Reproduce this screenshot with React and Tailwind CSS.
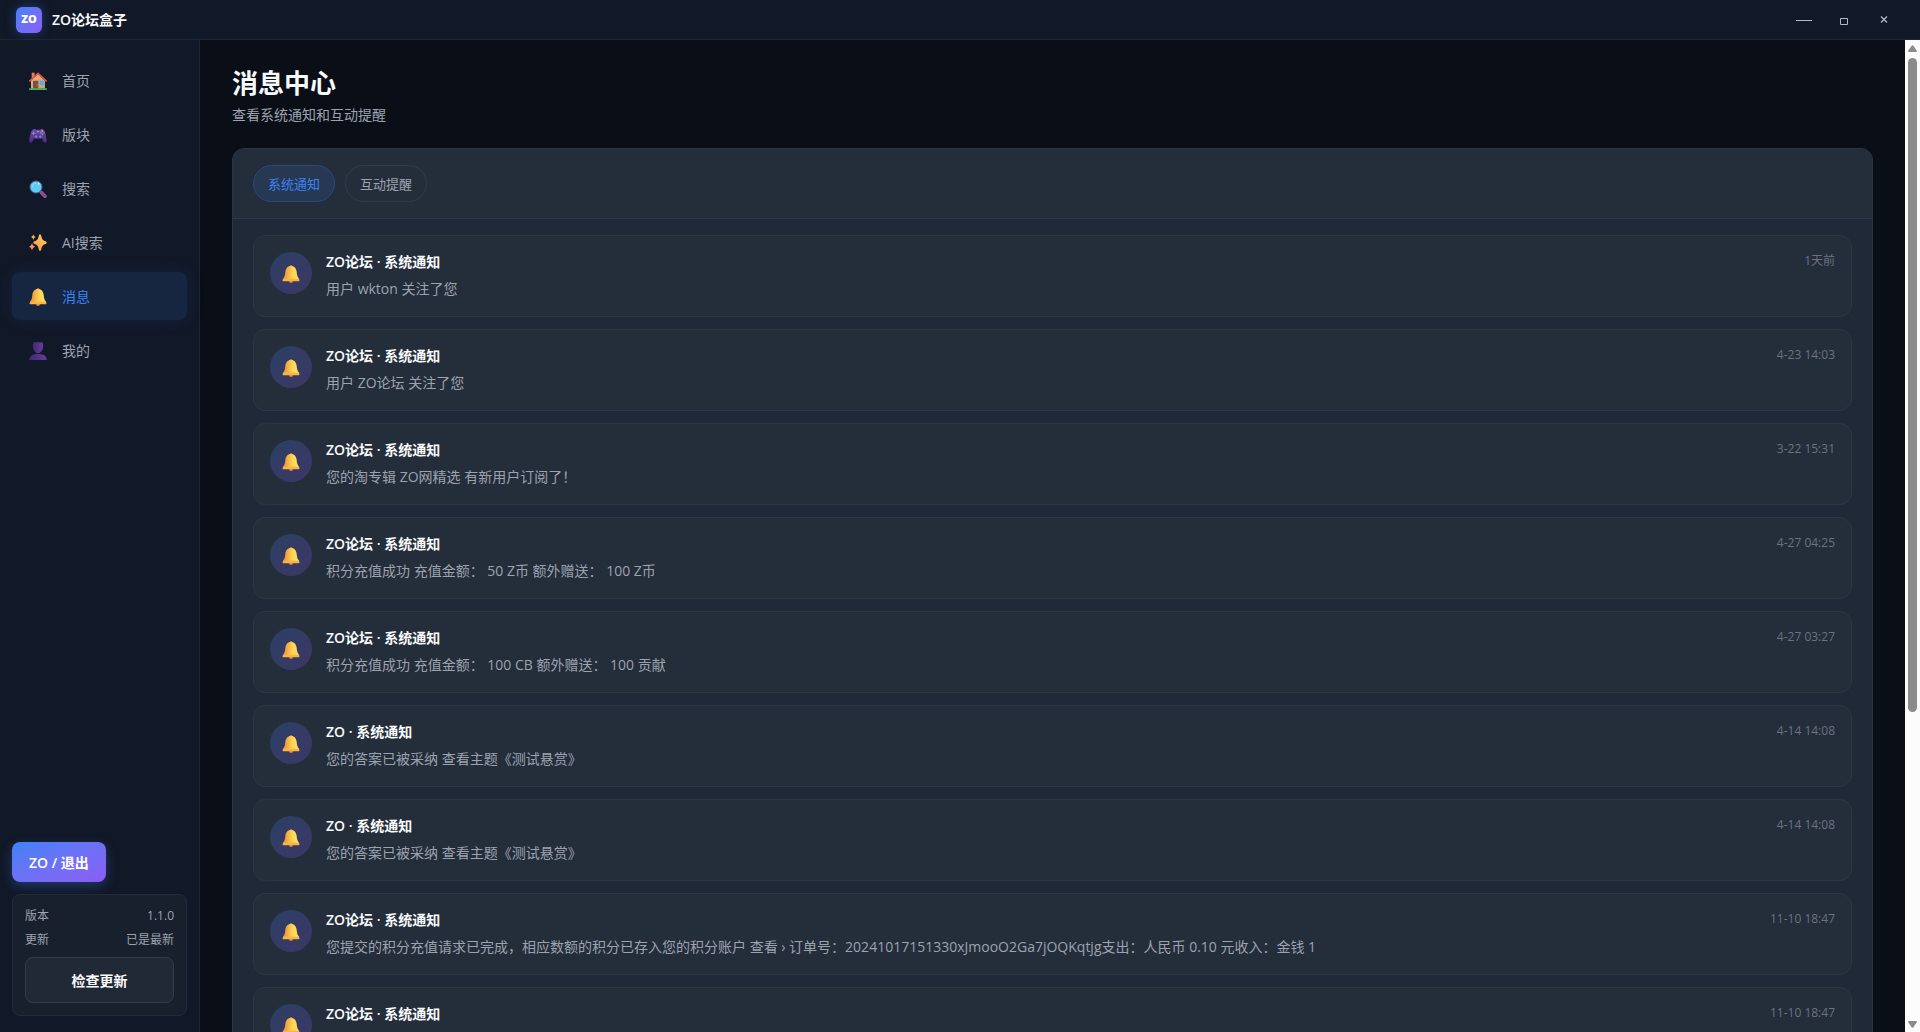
import React, { useState } from 'react';

const navItems = [
  { id: 'home', label: '首页', Icon: HomeIcon },
  { id: 'boards', label: '版块', Icon: GamepadIcon },
  { id: 'search', label: '搜索', Icon: SearchIcon },
  { id: 'ai', label: 'AI搜索', Icon: SparklesIcon },
  { id: 'messages', label: '消息', Icon: BellIcon },
  { id: 'mine', label: '我的', Icon: UserIcon },
];

const tabs = [
  { id: 'system', label: '系统通知' },
  { id: 'interact', label: '互动提醒' },
];

const notices = [
  { title: 'ZO论坛 · 系统通知', text: '用户 wkton 关注了您', time: '1天前' },
  { title: 'ZO论坛 · 系统通知', text: '用户 ZO论坛 关注了您', time: '4-23 14:03' },
  { title: 'ZO论坛 · 系统通知', text: '您的淘专辑 ZO网精选 有新用户订阅了！', time: '3-22 15:31' },
  { title: 'ZO论坛 · 系统通知', text: '积分充值成功 充值金额： 50 Z币 额外赠送： 100 Z币', time: '4-27 04:25' },
  { title: 'ZO论坛 · 系统通知', text: '积分充值成功 充值金额： 100 CB 额外赠送： 100 贡献', time: '4-27 03:27' },
  { title: 'ZO · 系统通知', text: '您的答案已被采纳 查看主题《测试悬赏》', time: '4-14 14:08' },
  { title: 'ZO · 系统通知', text: '您的答案已被采纳 查看主题《测试悬赏》', time: '4-14 14:08' },
  {
    title: 'ZO论坛 · 系统通知',
    text: '您提交的积分充值请求已完成，相应数额的积分已存入您的积分账户 查看 › 订单号：20241017151330xJmooO2Ga7jOQKqtjg支出：人民币 0.10 元收入：金钱 1',
    time: '11-10 18:47',
  },
  { title: 'ZO论坛 · 系统通知', time: '11-10 18:47' },
];

function HomeIcon() {
  return (
    <svg viewBox="0 0 54 54" className="size-[18px]" aria-hidden="true">
      <defs>
        <linearGradient id="homeWall" x1="0" y1="0" x2="1" y2="1">
          <stop offset="0" stopColor="#f0b183" />
          <stop offset="1" stopColor="#d39a70" />
        </linearGradient>
      </defs>
      <rect x="8" y="2" width="9" height="20" fill="#c9855b" />
      <path d="M6 26 27 6l21 20v24H6z" fill="url(#homeWall)" />
      <rect x="12" y="26" width="16" height="24" rx="1" fill="#7c4f45" />
      <circle cx="24" cy="38" r="1.5" fill="#d9a27a" />
      <rect x="32" y="26" width="13" height="13" rx="1" fill="#3fb4f2" />
      <path d="M2 27 27 4l25 23" fill="none" stroke="#e2543a" strokeWidth="5" strokeLinecap="round" strokeLinejoin="round" />
      <rect x="0" y="49" width="54" height="5" rx="2" fill="#3bb55c" />
    </svg>
  );
}

function GamepadIcon() {
  return (
    <svg viewBox="0 0 54 54" className="size-[18px]" aria-hidden="true">
      <defs>
        <linearGradient id="padBody" x1="0" y1="0" x2="0" y2="1">
          <stop offset="0" stopColor="#6f4fa8" />
          <stop offset="1" stopColor="#4b2a80" />
        </linearGradient>
      </defs>
      <path
        d="M13 10c3-2 6-1 8 1h12c2-2 5-3 8-1 6 2 9 12 12 31 1 6-1 9-4 9-4 0-6-5-10-12H15C11 45 9 50 5 50c-3 0-5-3-4-9C4 22 7 12 13 10z"
        fill="url(#padBody)"
      />
      <path d="M14 17v10M9 22h10" stroke="#8d86e0" strokeWidth="3" />
      <path d="M21 28v8M17 32h8M34 28v8M30 32h8" stroke="#8a7be0" strokeWidth="3" />
      <circle cx="27" cy="17" r="2" fill="#d8d0ff" />
      <circle cx="40" cy="15" r="2.6" fill="#f3c84b" />
      <circle cx="35" cy="20" r="2.6" fill="#3fa9f5" />
      <circle cx="45" cy="20" r="2.6" fill="#ef4b5f" />
      <circle cx="40" cy="25" r="2.6" fill="#35c48b" />
    </svg>
  );
}

function SearchIcon() {
  return (
    <svg viewBox="0 0 54 54" className="size-[18px]" aria-hidden="true">
      <path d="m33 34 4 4" stroke="#8a6aa8" strokeWidth="5" />
      <path d="m38 38 10 11" stroke="#8b4f8f" strokeWidth="11" strokeLinecap="round" />
      <circle cx="21" cy="21" r="18" fill="#5ecbf0" stroke="#5d5f9e" strokeWidth="3" />
      <path d="M9 21a12 12 0 0 1 12-12" fill="none" stroke="#8fe0fa" strokeWidth="3" strokeLinecap="round" />
      <circle cx="29" cy="11" r="2.5" fill="#d7f6ff" />
    </svg>
  );
}

function SparklesIcon() {
  return (
    <svg viewBox="0 0 54 54" className="size-[18px]" aria-hidden="true">
      <defs>
        <linearGradient id="spark" x1="1" y1="0" x2="0" y2="1">
          <stop offset="0" stopColor="#ffd84f" />
          <stop offset="1" stopColor="#ff8a5c" />
        </linearGradient>
      </defs>
      <path d="M33 1c2 0 3 2 4 6 2 9 4 12 12 15 3 1 4 2 4 4s-1 3-4 4c-8 3-10 6-12 15-1 4-2 6-4 6s-3-2-4-6c-2-9-4-12-12-15-3-1-4-2-4-4s1-3 4-4c8-3 10-6 12-15 1-4 2-6 4-6z" fill="url(#spark)" />
      <path d="M13 1c1 5 3 7 7 8-4 2-6 4-7 9-1-5-3-7-7-9 4-1 6-3 7-8z" fill="#ffb95a" />
      <path d="M9 28c2 6 4 8 10 10-6 2-8 4-10 11-2-7-4-9-9-11 5-2 7-4 9-10z" fill="#ff8f6b" />
    </svg>
  );
}

function BellIcon() {
  return (
    <svg viewBox="0 0 54 54" className="size-[18px]" aria-hidden="true">
      <defs>
        <linearGradient id="bellBody" x1="0" y1="0" x2="1" y2="0">
          <stop offset="0.1" stopColor="#ee9440" />
          <stop offset="0.6" stopColor="#ffd752" />
          <stop offset="1" stopColor="#ffe063" />
        </linearGradient>
      </defs>
      <circle cx="27" cy="4" r="3.5" fill="#f5a545" />
      <circle cx="27" cy="48" r="6" fill="#e8804a" />
      <path d="M27 3C16 3 11 11 10 21c-1 9-2 14-6 19-2 3-2 8-1 8h48c2 0 1-5-1-8-4-5-5-10-6-19C43 11 38 3 27 3z" fill="url(#bellBody)" />
      <path d="M5 41h44c2 2 3 8 2 8H3c-2 0-1-6 2-8z" fill="#f9b444" />
    </svg>
  );
}

function UserIcon() {
  return (
    <svg viewBox="0 0 54 54" className="size-[18px]" aria-hidden="true">
      <defs>
        <linearGradient id="userBody" x1="0" y1="0" x2="1" y2="0">
          <stop offset="0" stopColor="#44276f" />
          <stop offset="1" stopColor="#633f9c" />
        </linearGradient>
      </defs>
      <path d="M14 1h26c3 5 3 10 2 15-1 10-7 18-15 18s-14-8-15-18c-1-5-1-10 2-15z" fill="url(#userBody)" />
      <path d="M1 54c0-12 9-18 26-18s26 6 26 18z" fill="url(#userBody)" />
    </svg>
  );
}

function TitleBar() {
  return (
    <header className="flex h-10 shrink-0 items-center justify-between border-b border-[#1e2634] bg-[#111827] px-4">
      <div className="flex items-center gap-[10px]">
        <div className="flex size-[26px] items-center justify-center rounded-md bg-linear-to-br from-[#3b82f6] to-[#8b5cf6] text-[11px] font-extrabold text-white shadow-[0_0_12px_rgba(59,130,246,0.35)]">
          ZO
        </div>
        <span className="text-sm font-semibold text-[#f9fafb]">ZO论坛盒子</span>
      </div>
      <div className="flex text-[#b4bac4]">
        <button type="button" aria-label="最小化" className="flex h-8 w-10 items-center justify-center">
          <svg viewBox="0 0 16 10" className="h-[10px] w-4" stroke="currentColor" fill="none">
            <path d="M0 5.5h16" />
          </svg>
        </button>
        <button type="button" aria-label="最大化" className="flex h-8 w-10 items-center justify-center">
          <svg viewBox="0 0 8 10" className="h-[10px] w-2" stroke="currentColor" fill="none">
            <path d="M.5 3.500h7v6h-7z" />
          </svg>
        </button>
        <button type="button" aria-label="关闭" className="flex h-8 w-10 items-center justify-center">
          <svg viewBox="0 0 8 10" className="h-[10px] w-2" stroke="currentColor" strokeWidth="1.3" fill="none">
            <path d="m1 1.500 6 6m0-6-6 6" />
          </svg>
        </button>
      </div>
    </header>
  );
}

function Sidebar({ active, setActive }) {
  return (
    <aside className="flex w-[200px] shrink-0 flex-col justify-between border-r border-[#1e2634] bg-[#111827] px-3 py-4">
      <nav className="flex flex-col gap-[6px]">
        {navItems.map(({ id, label, Icon }) => (
          <button
            key={id}
            type="button"
            onClick={() => setActive(id)}
            className={
              id === active
                ? 'flex h-12 items-center gap-[15px] rounded-lg bg-[#162640] pt-[2px] pl-[17px] text-sm text-[#3b82f6] shadow-[0_0_20px_rgba(59,130,246,0.1)]'
                : 'flex h-12 items-center gap-[15px] rounded-lg pt-[2px] pl-[17px] text-sm text-[#9ca3af]'
            }
          >
            <Icon />
            <span>{label}</span>
          </button>
        ))}
      </nav>

      <div className="flex flex-col items-start gap-3">
        <button
          type="button"
          className="h-10 rounded-lg bg-linear-to-br from-[#3b82f6] to-[#8b5cf6] px-[17px] pt-[2px] text-sm font-semibold text-white shadow-[0_4px_12px_rgba(59,130,246,0.3)]"
        >
          ZO / 退出
        </button>
        <div className="w-full rounded-lg border border-[#232b38] bg-[#181f2d] p-3 text-xs text-[#9ca3af]">
          <div className="flex h-[18px] items-center justify-between">
            <span>版本</span>
            <span>1.1.0</span>
          </div>
          <div className="mt-[6px] flex h-[18px] items-center justify-between">
            <span>更新</span>
            <span>已是最新</span>
          </div>
          <button
            type="button"
            className="mt-2 h-[46px] w-full rounded-lg border border-[#333a48] bg-[#222936] pt-[2px] text-sm font-semibold text-[#f9fafb]"
          >
            检查更新
          </button>
        </div>
      </div>
    </aside>
  );
}

function NoticeItem({ title, text, time }) {
  return (
    <li className="flex items-start gap-[14px] rounded-xl border border-[#2d3643] bg-[#242d3a] px-4 pt-4 pb-[18px]">
      <div className="flex size-[42px] shrink-0 items-center justify-center rounded-full bg-linear-to-br from-[#293f63] to-[#3d3766] pt-[2px]">
        <BellIcon />
      </div>
      <div className="min-w-0 flex-1">
        <h3 className="text-sm leading-[19px] font-semibold text-[#f9fafb]">{title}</h3>
        {text && <p className="mt-2 truncate text-sm leading-[19px] text-[#9ca3af]">{text}</p>}
      </div>
      <time className="shrink-0 text-xs leading-[18px] text-[#6b7280]">{time}</time>
    </li>
  );
}

function Scrollbar() {
  return (
    <div className="flex w-[15px] shrink-0 flex-col items-center bg-[#fcfcfc] text-[#8b8b8b]" aria-hidden="true">
      <svg viewBox="0 0 9 18" className="h-[18px] w-[9px]" fill="currentColor">
        <path d="M3.600 5.800q.9-1.300 1.800 0l3.400 5q.5 1.200-.8 1.200H1q-1.300 0-.8-1.200z" />
      </svg>
      <div className="w-[9px] flex-[654] rounded-full bg-[#8b8b8b]" />
      <div className="flex-[302]" />
      <svg viewBox="0 0 9 18" className="h-[18px] w-[9px]" fill="currentColor">
        <path d="M3.600 13.200q.9 1.300 1.800 0l3.400-5Q9.300 7 8 7H1q-1.300 0-.8 1.200z" />
      </svg>
    </div>
  );
}

function App() {
  const [active, setActive] = useState('messages');
  const [tab, setTab] = useState('system');

  return (
    <div className="flex h-screen flex-col overflow-hidden bg-[#0a0e17] font-['Open_Sans','Noto_Sans_CJK_SC',sans-serif]">
      <TitleBar />
      <div className="flex min-h-0 flex-1">
        <Sidebar active={active} setActive={setActive} />

        {/* Main content */}
        <main className="min-w-0 flex-1 overflow-y-auto px-8 py-6 [scrollbar-width:none]">
          <h1 className="text-[26px] leading-[39px] font-bold text-[#f9fafb]">消息中心</h1>
          <p className="mt-px text-sm leading-[21px] text-[#9ca3af]">查看系统通知和互动提醒</p>

          <section className="mt-[23px] overflow-hidden rounded-xl border border-[#2c3542] bg-[#1f2937]">
            <div className="flex gap-[10px] border-b border-[#2e3744] bg-[#242d3a] px-5 py-4">
              {tabs.map((item) => (
                <button
                  key={item.id}
                  type="button"
                  onClick={() => setTab(item.id)}
                  className={
                    item.id === tab
                      ? 'h-[37px] rounded-full border border-[#294a7e] bg-[#273853] px-[14px] pt-[2px] text-[13px] text-[#3b82f6]'
                      : 'h-[37px] rounded-full border border-[#323b48] px-[14px] pt-[2px] text-[13px] text-[#9ca3af]'
                  }
                >
                  {item.label}
                </button>
              ))}
            </div>
            <ul className="flex flex-col gap-3 px-5 py-4">
              {notices.map((notice, index) => (
                <NoticeItem key={index} {...notice} />
              ))}
            </ul>
          </section>
        </main>
        <Scrollbar />
      </div>
    </div>
  );
}

export default App;
